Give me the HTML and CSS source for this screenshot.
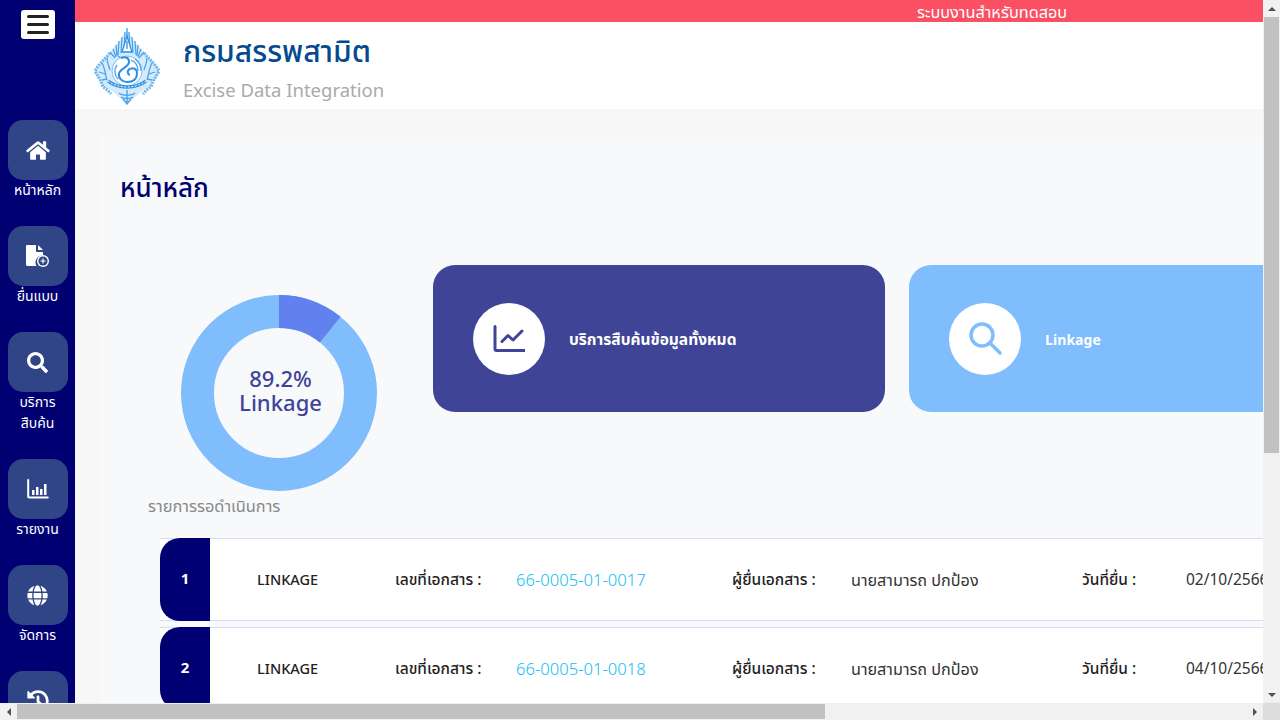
FILE: index.html
```html
<!DOCTYPE html>
<html lang="th">
<head>
    <meta charset="UTF-8">
    <meta name="viewport" content="width=device-width, initial-scale=1.0">
    <title>Excise Data Integration</title>
    <link rel="stylesheet" href="styles.css">
</head>
<body>
<div class="window">
    <div class="viewport">
        <nav class="sidebar">
            <div class="menu-btn"><span></span><span></span><span></span></div>
            <a class="nav-item">
                <span class="nav-tile">
                    <svg class="ic-home" viewBox="0 0 576 512"><path fill="#fff" d="M280.37 148.26L96 300.11V464a16 16 0 0 0 16 16l112.06-.29a16 16 0 0 0 15.92-16V368a16 16 0 0 1 16-16h64a16 16 0 0 1 16 16v95.64a16 16 0 0 0 16 16.05L464 480a16 16 0 0 0 16-16V300L295.67 148.26a12.19 12.19 0 0 0-15.3 0zM571.6 251.47L488 182.56V44.05a12 12 0 0 0-12-12h-56a12 12 0 0 0-12 12v72.61L318.47 43a48 48 0 0 0-61 0L4.34 251.47a12 12 0 0 0-1.6 16.9l25.5 31A12 12 0 0 0 45.15 301l235.22-193.74a12.19 12.19 0 0 1 15.3 0L530.9 301a12 12 0 0 0 16.9-1.6l25.5-31a12 12 0 0 0-1.7-16.93z"/></svg>
                </span>
                <span class="nav-label">หน้าหลัก</span>
            </a>
            <a class="nav-item">
                <span class="nav-tile">
                    <svg class="ic-file" viewBox="0 0 26 24">
                        <path fill="#fff" d="M1 2.2C1 1.5 1.5 1 2.2 1H11v6c0 .6.4 1 1 1h6v3.5a7 7 0 0 0-6.500 10.500H2.200C1.500 22 1 21.500 1 20.800z"/>
                        <path fill="#fff" d="M13 1l5 5h-5z"/>
                        <circle cx="18" cy="17" r="6" fill="#fff"/>
                        <circle cx="18" cy="17" r="4.600" fill="#2f4585"/>
                        <path d="M18 14.500v5M15.500 17h5" stroke="#fff" stroke-width="1.200"/>
                    </svg>
                </span>
                <span class="nav-label">ยื่นแบบ</span>
            </a>
            <a class="nav-item">
                <span class="nav-tile">
                    <svg class="ic-search" viewBox="0 0 512 512"><path fill="#fff" d="M505 442.7L405.3 343c-4.500-4.500-10.600-7-17-7H372c27.600-35.300 44-79.700 44-128C416 93.100 322.900 0 208 0S0 93.100 0 208s93.100 208 208 208c48.300 0 92.700-16.400 128-44v16.300c0 6.400 2.500 12.500 7 17l99.700 99.700c9.400 9.400 24.600 9.400 33.900 0l28.300-28.300c9.400-9.400 9.400-24.600.1-34zM208 336c-70.700 0-128-57.200-128-128 0-70.700 57.200-128 128-128 70.700 0 128 57.200 128 128 0 70.700-57.200 128-128 128z"/></svg>
                </span>
                <span class="nav-label">บริการ<br>สืบค้น</span>
            </a>
            <a class="nav-item">
                <span class="nav-tile">
                    <svg class="ic-report" viewBox="0 0 22 20">
                        <path d="M1.200 1v16.500c0 .7.400 1.100 1.100 1.100h18.500" fill="none" stroke="#fff" stroke-width="2" stroke-linecap="round"/>
                        <path fill="#fff" d="M5 11h2.500v5H5zM9 8h2.500v8H9zM13 10h2.500v6H13zM17 5h2.500v11H17z"/>
                    </svg>
                </span>
                <span class="nav-label">รายงาน</span>
            </a>
            <a class="nav-item">
                <span class="nav-tile">
                    <svg class="ic-globe" viewBox="0 0 496 512"><path fill="#fff" d="M336.500 160C322 70.700 287.800 8 248 8s-74 62.700-88.500 152h177zM152 256c0 22.200 1.200 43.500 3.300 64h185.300c2.100-20.500 3.300-41.800 3.300-64s-1.200-43.500-3.300-64H155.300c-2.100 20.500-3.300 41.800-3.300 64zm324.700-96c-28.600-67.900-86.500-120.400-158-141.600 24.400 33.800 41.200 84.700 50 141.600h108zM177.200 18.400C105.800 39.600 47.800 92.100 19.300 160h108c8.700-56.900 25.500-107.800 49.900-141.600zM487.400 192H372.700c2.100 21 3.300 42.500 3.300 64s-1.200 43-3.300 64h114.600c5.500-20.500 8.600-41.800 8.600-64s-3.100-43.500-8.500-64zM120 256c0-21.500 1.200-43 3.300-64H8.600C3.200 212.500 0 233.800 0 256s3.200 43.500 8.600 64h114.600c-2-21-3.200-42.500-3.200-64zm39.500 96c14.500 89.300 48.700 152 88.500 152s74-62.700 88.500-152h-177zm159.300 141.600c71.400-21.200 129.400-73.700 158-141.600h-108c-8.800 56.900-25.600 107.800-50 141.600zM19.300 352c28.600 67.900 86.500 120.400 158 141.600-24.400-33.800-41.200-84.700-50-141.600h-108z"/></svg>
                </span>
                <span class="nav-label">จัดการ</span>
            </a>
            <a class="nav-item">
                <span class="nav-tile">
                    <svg class="ic-history" viewBox="0 0 512 512"><path fill="#fff" d="M504 255.531c.253 136.640-111.180 248.372-247.820 248.468-59.015.042-113.223-20.530-155.822-54.911-11.077-8.940-11.905-25.541-1.839-35.607l11.267-11.267c8.609-8.609 22.353-9.551 31.891-1.984C173.062 425.135 212.781 440 256 440c101.705 0 184-82.311 184-184 0-101.705-82.311-184-184-184-48.814 0-93.149 18.969-126.068 49.932l50.754 50.754c10.080 10.080 2.941 27.314-11.313 27.314H24c-8.837 0-16-7.163-16-16V38.627c0-14.254 17.234-21.393 27.314-11.314l49.372 49.372C129.209 34.136 189.552 8 256 8c136.810 0 247.747 110.780 248 247.531zm-180.912 78.784l9.823-12.630c8.138-10.463 6.253-25.542-4.210-33.679L288 256.349V152c0-13.255-10.745-24-24-24h-16c-13.255 0-24 10.745-24 24v135.651l65.409 50.874c10.463 8.137 25.541 6.253 33.679-4.210z"/></svg>
                </span>
            </a>
        </nav>

        <div class="main">
            <div class="test-bar">ระบบงานสำหรับทดสอบ</div>
            <header class="header">
                <svg class="logo" viewBox="0 0 66 78">
                    <path d="M33 1C30 10 22 18 14 27 8 34 3 39 1 44c3 6 6 9 8 16 6 1 10 4 16 10 3 2 5 5 8 7 3-2 5-5 8-7 6-6 10-9 16-10 2-7 5-10 8-16-2-5-7-10-13-17C44 18 36 10 33 1z" fill="#d5eafb"/>
                    <!-- rays above the crest -->
                    <path d="M33 1v24M31 5l-1 20M35 5l1 20M28 10l-1 16M38 10l1 16M25 14l-1 14M41 14l1 14M22 18l1 11M44 18l-1 11M19 22l3 8M47 22l-3 8M16 25l5 6M50 25l-5 6" stroke="#4aa3ec" stroke-width="1.300"/>
                    <path d="M33 9l-5 16h10z" fill="#fff" stroke="#2f8fe0" stroke-width="1.300"/>
                    <path d="M33 14v8" stroke="#2f8fe0" stroke-width="1.300"/>
                    <!-- leafy side edges -->
                    <path d="M16 26C10 33 4 38 1 44c3 6 6 9 8 16 2 1 5 3 8 7M50 26c6 7 12 12 15 18-3 6-6 9-8 16-2 1-5 3-8 7" fill="none" stroke="#6ab6f2" stroke-width="3" stroke-dasharray="2 1"/>
                    <path d="M8 36c3 5 3 11 5 17M13 31c0 5 2 8 3 12M58 36c-3 5-3 11-5 17M53 31c0 5-2 8-3 12M5 45l6 2M61 45l-6 2M8 53l5-1M58 53l-5-1" fill="none" stroke="#4aa3ec" stroke-width="1.300"/>
                    <!-- rooster -->
                    <circle cx="33" cy="44" r="15" fill="#fff" stroke="#7cc0f5" stroke-width="1"/>
                    <path d="M27 31c5-2 8 0 8 4 0 5-8 6-10 11-1 5 3 9 8 9 6 0 10-3 10-9 0-4-4-6-7-4-3 1-3 5 0 6" fill="none" stroke="#2f8fe0" stroke-width="2"/>
                    <path d="M37 33c5 2 7 6 7 11M41 32c4 3 6 7 6 12M23 38c-3 4-3 10 1 14M27 31l-3-2" fill="none" stroke="#4aa3ec" stroke-width="1.300"/>
                    <!-- banner and foot -->
                    <path d="M14 54c10 8 28 8 38 0" fill="none" stroke="#2f8fe0" stroke-width="3.500"/>
                    <path d="M14 54c10 8 28 8 38 0" fill="none" stroke="#fff" stroke-width="1" stroke-dasharray="2 1.500"/>
                    <path d="M25 66c3 3 13 3 16 0M27 70c2 2 10 2 12 0M33 63v14M29 72l4 5 4-5" fill="none" stroke="#4aa3ec" stroke-width="1.400"/>
                </svg>
                <div class="brand">
                    <div class="brand-name">กรมสรรพสามิต</div>
                    <div class="brand-sub">Excise Data Integration</div>
                </div>
            </header>

            <div class="content">
                <div class="panel">
                    <h1 class="page-title">หน้าหลัก</h1>
                    <div class="top-row">
                        <div class="chart-col">
                            <div class="donut">
                                <svg viewBox="0 0 196 196">
                                    <circle cx="98" cy="98" r="81.500" fill="none" stroke="#80bdfd" stroke-width="33"/>
                                    <circle cx="98" cy="98" r="81.500" fill="none" stroke="#6081ee" stroke-width="33" stroke-dasharray="55.300 512" transform="rotate(-90 98 98)"/>
                                </svg>
                                <div class="donut-text"><span>89.2%</span><span>Linkage</span></div>
                            </div>
                            <div class="chart-caption">รายการรอดำเนินการ</div>
                        </div>
                        <div class="cards">
                            <div class="card card-dark">
                                <span class="card-circle">
                                    <svg viewBox="0 0 32 28" class="ic-line"><path d="M2 1.500v22.500c0 1 .6 1.500 1.500 1.500h28" fill="none" stroke="#404496" stroke-width="3" stroke-linecap="round"/><path d="M9 16.500l6-6 5 4.500 9-9" fill="none" stroke="#404496" stroke-width="3" stroke-linecap="round" stroke-linejoin="round"/></svg>
                                </span>
                                <span class="card-text">บริการสืบค้นข้อมูลทั้งหมด</span>
                            </div>
                            <div class="card card-light">
                                <span class="card-circle">
                                    <svg viewBox="0 0 33 33" class="ic-glass"><circle cx="13" cy="13" r="11" fill="none" stroke="#80bdfd" stroke-width="3.500"/><path d="M21 21l10 10" stroke="#80bdfd" stroke-width="3.500" stroke-linecap="round"/></svg>
                                </span>
                                <span class="card-text">Linkage</span>
                            </div>
                        </div>
                    </div>

                    <div class="rows">
                        <div class="row">
                            <div class="row-no">1</div>
                            <div class="row-type">LINKAGE</div>
                            <div class="row-label">เลขที่เอกสาร :</div>
                            <div class="row-doc">66-0005-01-0017</div>
                            <div class="row-label">ผู้ยื่นเอกสาร :</div>
                            <div class="row-val">นายสามารถ ปกป้อง</div>
                            <div class="row-label">วันที่ยื่น :</div>
                            <div class="row-date">02/10/2566</div>
                        </div>
                        <div class="row">
                            <div class="row-no">2</div>
                            <div class="row-type">LINKAGE</div>
                            <div class="row-label">เลขที่เอกสาร :</div>
                            <div class="row-doc">66-0005-01-0018</div>
                            <div class="row-label">ผู้ยื่นเอกสาร :</div>
                            <div class="row-val">นายสามารถ ปกป้อง</div>
                            <div class="row-label">วันที่ยื่น :</div>
                            <div class="row-date">04/10/2566</div>
                        </div>
                    </div>
                </div>
            </div>
        </div>
    </div>

    <div class="vbar">
        <span class="arrow arrow-up"></span>
        <div class="vbar-track"><div class="vbar-thumb"></div></div>
        <span class="arrow arrow-down"></span>
    </div>
    <div class="hbar">
        <span class="arrow arrow-left"></span>
        <div class="hbar-track"><div class="hbar-thumb"></div></div>
        <span class="arrow arrow-right"></span>
    </div>
    <div class="corner"></div>
</div>
</body>
</html>
```

FILE: styles.css
```css
html, body {
    margin: 0;
    padding: 0;
    height: 100%;
    overflow: hidden;
}
body {
    font-family: "Noto Sans Thai", "Noto Sans", "Inter", "DejaVu Sans", sans-serif;
    color: #222;
}
.window {
    width: 1280px;
    height: 720px;
    display: grid;
    grid-template-columns: 1263px 17px;
    grid-template-rows: 703px 17px;
}
.viewport {
    display: flex;
    overflow: hidden;
    background: #f7f7f8;
}

/* sidebar */
.sidebar {
    flex: 0 0 75px;
    background: #000072;
    display: flex;
    flex-direction: column;
    align-items: center;
    height: 703px;
    overflow: hidden;
}
.menu-btn {
    width: 34px;
    height: 29px;
    margin-top: 10px;
    margin-bottom: 81px;
    background: white;
    border-radius: 3px;
    display: flex;
    flex-direction: column;
    justify-content: center;
    align-items: center;
    gap: 5px;
    flex-shrink: 0;
}
.menu-btn span {
    display: block;
    width: 22px;
    height: 3px;
    border-radius: 2px;
    background: #222;
}
.nav-item {
    display: flex;
    flex-direction: column;
    align-items: center;
    margin-bottom: 25px;
    flex-shrink: 0;
}
.nav-tile {
    width: 60px;
    height: 60px;
    border-radius: 15px;
    background: #2f4585;
    display: flex;
    align-items: center;
    justify-content: center;
}
.nav-label {
    color: white;
    font-size: 14px;
    line-height: 21px;
    text-align: center;
}
.ic-home { width: 24px; height: 21px; }
.ic-file { width: 26px; height: 24px; }
.ic-search { width: 21px; height: 21px; }
.ic-report { width: 22px; height: 20px; }
.ic-globe { width: 21px; height: 21px; }
.ic-history { width: 22px; height: 22px; }

/* top */
.main {
    flex: 0 0 1188px;
    min-width: 0;
}
.test-bar {
    height: 22px;
    overflow: hidden;
    background: #fb4f63;
    color: white;
    font-size: 16.3px;
    line-height: 27px;
    padding-left: 842px;
    white-space: nowrap;
}
.header {
    height: 87px;
    background: white;
    display: flex;
    align-items: center;
    padding-left: 19px;
    gap: 23px;
}
.logo {
    width: 66px;
    height: 78px;
}
.brand {
    padding-top: 7px;
}
.brand-name {
    font-size: 30px;
    line-height: 38px;
    font-weight: 500;
    color: #054a91;
}
.brand-sub {
    font-size: 18.5px;
    line-height: 26px;
    margin-top: 6px;
    color: #aaa;
}

/* content */
.content {
    padding: 26px 0 0 25px;
}
.panel {
    background: #f8f9fb;
    padding: 28px 0 0 20px;
    width: 1500px;
}
.page-title {
    margin: 0;
    font-size: 26px;
    line-height: 52px;
    font-weight: 500;
    color: #000072;
}
.top-row {
    display: flex;
    margin-top: 50px;
}
.chart-col {
    width: 313px;
    padding-top: 30px;
    flex-shrink: 0;
}
.donut {
    position: relative;
    width: 196px;
    height: 196px;
    margin-left: 61px;
}
.donut svg {
    display: block;
    width: 196px;
    height: 196px;
}
.donut-text {
    position: absolute;
    inset: 0 0 0 3px;
    display: flex;
    flex-direction: column;
    align-items: center;
    justify-content: center;
    font-size: 22px;
    line-height: 24px;
    font-weight: 500;
    color: #40439a;
}
.chart-caption {
    margin: 4px 0 0 28px;
    font-size: 16.4px;
    line-height: 24px;
    color: #888;
}
.cards {
    display: flex;
    gap: 24px;
}
.card {
    width: 452px;
    height: 147px;
    border-radius: 22px;
    display: flex;
    align-items: center;
    padding-left: 40px;
    gap: 24px;
    box-sizing: border-box;
}
.card-dark { background: #404496; }
.card-light { background: #80bdfd; }
.card-light .card-text { font-size: 14px; }
.card-circle {
    width: 72px;
    height: 72px;
    border-radius: 50%;
    background: white;
    display: flex;
    align-items: center;
    justify-content: center;
}
.ic-line { width: 32px; height: 28px; }
.ic-glass { width: 33px; height: 33px; }
.card-text {
    color: white;
    font-size: 15.5px;
    font-weight: 700;
    padding-top: 3px;
}

/* rows */
.rows {
    margin: 19px 0 0 40px;
}
.row {
    display: grid;
    grid-template-columns: 50px 47px 138px 121px 216px 119px 231px 104px 1fr;
    align-items: center;
    height: 83px;
    box-sizing: border-box;
    background: white;
    border-top: 1px solid #dadaf0;
    border-bottom: 1px solid #dadaf0;
    margin-bottom: 6px;
    padding-top: 2px;
    font-size: 15.5px;
}
.row-no {
    align-self: stretch;
    margin: -3px 0 -1px;
    background: #000072;
    border-radius: 20px 0 0 20px;
    color: white;
    font-weight: 700;
    font-size: 15px;
    display: flex;
    align-items: center;
    justify-content: center;
}
.row-type {
    grid-column: 3;
    font-size: 14.5px;
    font-weight: 500;
}
.row-label {
    font-weight: 500;
    color: #222;
}
.row-doc {
    color: #12bdf2;
    font-size: 16.6px;
    font-weight: 300;
}
.row-val {
    color: #333;
    font-size: 16.2px;
    white-space: nowrap;
}
.row-date {
    color: #333;
    font-size: 15.5px;
    white-space: nowrap;
}

/* scrollbars */
.vbar, .hbar {
    background: #f1f1f1;
    display: flex;
}
.vbar {
    grid-column: 2;
    grid-row: 1;
    flex-direction: column;
}
.hbar {
    grid-column: 1;
    grid-row: 2;
}
.corner {
    grid-column: 2;
    grid-row: 2;
    background: #dcdcdc;
}
.arrow {
    flex: 0 0 17px;
    height: 17px;
    width: 17px;
    display: flex;
    align-items: center;
    justify-content: center;
}
.arrow::before {
    content: "";
    border: 4px solid transparent;
}
.arrow-up::before { border-bottom-color: #505050; border-top-width: 0; }
.arrow-down::before { border-top-color: #505050; border-bottom-width: 0; }
.arrow-left::before { border-right-color: #505050; border-left-width: 0; }
.arrow-right::before { border-left-color: #505050; border-right-width: 0; }
.vbar-track {
    flex: 1;
}
.vbar-thumb {
    width: 15px;
    height: 436px;
    margin-left: 1px;
    background: #c1c1c1;
}
.hbar-track {
    flex: 1;
}
.hbar-thumb {
    width: 808px;
    height: 15px;
    margin-top: 1px;
    background: #c1c1c1;
}
```
